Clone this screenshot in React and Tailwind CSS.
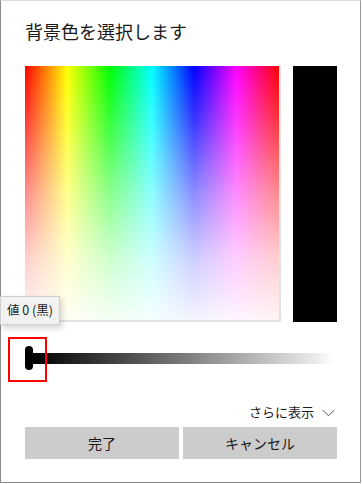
import React from "react";

const font = { fontFamily: '"Noto Sans CJK JP", "Noto Sans", sans-serif' };

const App = () => {
  return (
    <div
      className="relative w-[361px] h-[483px] bg-white border-l border-r border-b border-l-[#8a8a8a] border-r-[#9a9a9a] border-b-[#8a8a8a] border-t border-t-[#dcdcdc] pl-6 pr-[23px]"
      style={font}
    >
      {/* タイトル */}
      <h1 className="pt-[18px] text-[18px] leading-6 font-normal text-[#1a1a1a]">
        背景色を選択します
      </h1>

      {/* カラースペクトル */}
      <div className="flex gap-3 mt-[23px] h-[256px]">
        <div className="w-[256px] h-full border-r-2 border-b-2 border-[#e2e2e2] bg-[linear-gradient(to_bottom,rgba(255,255,255,0)_0%,rgba(255,255,255,0.2)_20%,rgba(255,255,255,0.55)_50%,rgba(255,255,255,0.8)_75%,rgba(255,255,255,0.96)_100%),linear-gradient(to_right,#ff0000_0%,#ffff00_16.6%,#00ff00_33.3%,#00ffff_50%,#0000ff_66.6%,#ff00ff_83.3%,#ff0000_100%)]" />
        <div className="w-[44px] h-full bg-black" />
      </div>

      {/* スライダー */}
      <div className="flex items-center mt-6 h-6 pr-[3px]">
        <div className="w-2 h-6 rounded-full bg-black shrink-0" />
        <div className="flex-1 h-[11px] bg-[linear-gradient(to_right,#000000_0%,#555555_35%,#bbbbbb_75%,#e6e6e6_92%,#ffffff_100%)]" />
      </div>

      {/* さらに表示 */}
      <div className="flex items-center justify-end gap-2 mt-[33px] pr-[2px] h-[18px]">
        <span className="text-[13px] leading-[18px] text-[#1a1a1a]">さらに表示</span>
        <svg width="13" height="8" viewBox="0 0 13 8" className="mt-[1px]">
          <polyline points="0.5,0.8 6.5,6.8 12.5,0.8" fill="none" stroke="#555" strokeWidth="1" />
        </svg>
      </div>

      {/* ボタン */}
      <div className="flex gap-1 mt-[6px]">
        <button className="flex-1 h-8 bg-[#cccccc] text-[14px] text-[#1a1a1a]">完了</button>
        <button className="flex-1 h-8 bg-[#cccccc] text-[14px] text-[#1a1a1a]">キャンセル</button>
      </div>

      {/* ツールチップ */}
      <div className="absolute left-[-1px] top-[295px] w-[60px] h-[29px] bg-[#f2f2f2] border border-[#cfcfcf] shadow-[2px_3px_6px_rgba(0,0,0,0.18)] flex items-center pl-[6px] text-[12.5px] text-[#1a1a1a]">
        値 0 (黒)
      </div>

      {/* 注目枠 */}
      <div className="absolute left-[7px] top-[336px] w-[39px] h-[45px] border-2 border-[#ff0000]" />
    </div>
  );
};

export default App;
